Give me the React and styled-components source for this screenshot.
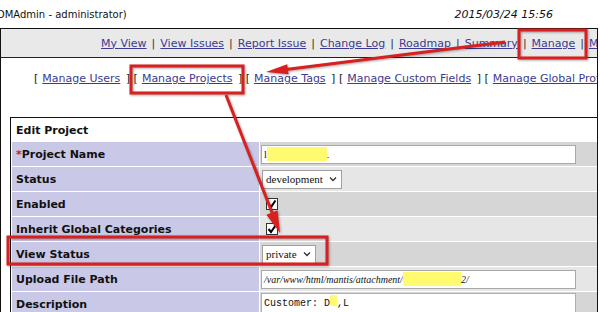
import React from "react";
import styled, { createGlobalStyle } from "styled-components";

const GlobalStyle = createGlobalStyle`
  html, body {
    margin: 0;
    padding: 0;
    background: #fff;
    overflow: hidden;
  }
`;

const Page = styled.div`
  position: relative;
  width: 600px;
  height: 312px;
  overflow: hidden;
  font-family: "DejaVu Sans", Verdana, sans-serif;
  color: #111;
  background: #fff;
`;

const TopBar = styled.div`
  height: 28px;
  display: flex;
  align-items: center;
  justify-content: space-between;
  padding-right: 47px;
  margin-left: -3px;
  white-space: nowrap;
`;

const LoggedIn = styled.span`
  font-size: 10px;
`;

const Clock = styled.span`
  font-size: 11px;
  font-style: italic;
`;

const Frame = styled.div`
  box-sizing: border-box;
  width: 598px;
  height: 284px;
  border: 1px solid #111;
  border-bottom: none;
`;

const MenuBar = styled.div`
  height: 28px;
  background: #e9e9e9;
  border-bottom: 1px solid #222;
  display: flex;
  align-items: center;
  padding-left: 100px;
  white-space: nowrap;
  overflow: hidden;
  font-size: 11px;
`;

const Link = styled.a`
  color: #3b3b91;
  text-decoration: underline;
  cursor: pointer;
`;

const Sep = styled.span`
  margin: 0 5px;
  color: #333;
`;

const SubMenu = styled.div`
  padding: 14px 0 0 33px;
  margin-bottom: 31px;
  line-height: 14px;
  height: 14px;
  font-size: 11px;
  white-space: nowrap;
  overflow: hidden;
`;

const Bracket = styled.span`
  margin: ${(p) => (p.$close ? "0 3.5px 0 5.5px" : "0 4px 0 0")};
  color: #222;
`;

const FormTable = styled.div`
  margin-left: 9px;
  border-top: 1px solid #111;
  border-left: 1px solid #111;
  padding: 1px 0 0 1px;
  display: grid;
  grid-template-columns: 247px 1fr;
  grid-template-rows: 22px;
  grid-auto-rows: 24px;
  gap: 1px;
  font-size: 11px;
`;

const HeaderCell = styled.div`
  grid-column: span 2;
  display: flex;
  align-items: center;
  padding-left: 4px;
  font-weight: bold;
  background: #fff;
`;

const Label = styled.div`
  background: #c9c9e7;
  display: flex;
  align-items: center;
  padding-left: 4px;
  font-weight: bold;
`;

const Req = styled.span`
  color: #c0243a;
`;

const Value = styled.div`
  background: ${(p) => (p.$light ? "#e6e6e6" : "#d6d6d6")};
  display: flex;
  align-items: ${(p) => (p.$top ? "flex-start" : "center")};
  padding-left: 1px;
  padding-top: ${(p) => (p.$top ? 1 : 0)}px;
`;

const TextBox = styled.div`
  box-sizing: border-box;
  width: 315px;
  height: 19px;
  background: #fff;
  border: 1px solid #a8a8a8;
  display: flex;
  align-items: center;
  padding-left: 2px;
  font-family: "Liberation Serif", "Times New Roman", serif;
  font-size: 10px;
  font-style: ${(p) => (p.$italic ? "italic" : "normal")};
  white-space: nowrap;
  overflow: hidden;
`;

const Redact = styled.span`
  display: inline-block;
  width: ${(p) => p.$w}px;
  height: ${(p) => p.$h || 14}px;
  background: #fffa6e;
`;

const Select = styled.div`
  box-sizing: border-box;
  height: 19px;
  margin-left: 1px;
  background: #fff;
  border: 1px solid #a0a0a0;
  display: flex;
  align-items: center;
  gap: 6px;
  padding: 0 4px 0 3px;
  font-family: "Liberation Serif", "Times New Roman", serif;
  font-size: 11px;
`;

const Check = styled.div`
  box-sizing: border-box;
  width: 12px;
  height: 12px;
  margin-left: 5px;
  background: #fff;
  border: 1px solid #333;
  display: flex;
  align-items: center;
  justify-content: center;
`;

const TextArea = styled.div`
  box-sizing: border-box;
  width: 315px;
  height: 30px;
  background: #fff;
  border: 1px solid #b0b0b0;
  padding: 1px 0 0 2px;
  font-family: "Liberation Mono", "Courier New", monospace;
  font-size: 10px;
  white-space: pre;
`;

const Overlay = styled.svg`
  position: absolute;
  left: 0;
  top: 0;
  width: 600px;
  height: 312px;
  pointer-events: none;
  filter: drop-shadow(1px 1px 1px rgba(0, 0, 0, 0.35));
`;

function Chevron() {
  return (
    <svg width="8" height="6" viewBox="0 0 8 6">
      <path d="M1 1.5 L4 4.5 L7 1.5" fill="none" stroke="#333" strokeWidth="1.3" />
    </svg>
  );
}

function Tick() {
  return (
    <svg width="10" height="10" viewBox="0 0 10 10">
      <path d="M1.5 5 L4 8 L8.5 1.5" fill="none" stroke="#000" strokeWidth="2" />
    </svg>
  );
}

const menu = ["My View", "View Issues", "Report Issue", "Change Log", "Roadmap", "Summary", "Manage", "My Account"];
const sub = ["Manage Users", "Manage Projects", "Manage Tags", "Manage Custom Fields", "Manage Global Profiles"];

function arrowHead(x1, y1, x2, y2, len, half) {
  const dx = x2 - x1;
  const dy = y2 - y1;
  const d = Math.hypot(dx, dy);
  const ux = dx / d;
  const uy = dy / d;
  const bx = x2 - ux * len;
  const by = y2 - uy * len;
  return `${x2},${y2} ${bx - uy * half},${by + ux * half} ${bx + uy * half},${by - ux * half}`;
}

function Annotations() {
  const red = "#d91f1f";
  return (
    <Overlay viewBox="0 0 600 312">
      <rect x="131" y="66" width="112" height="27" fill="none" stroke={red} strokeWidth="3" />
      <rect x="519" y="30" width="67" height="28" fill="none" stroke={red} strokeWidth="3" />
      <rect x="8" y="237" width="319" height="27" fill="none" stroke={red} strokeWidth="3" />
      <line x1="505" y1="42" x2="282" y2="70" stroke={red} strokeWidth="3" />
      <polygon points={arrowHead(505, 42, 266, 72, 22, 5)} fill={red} />
      <line x1="226" y1="95" x2="273" y2="215" stroke={red} strokeWidth="3" />
      <polygon points={arrowHead(226, 95, 280, 233, 22, 6)} fill={red} />
    </Overlay>
  );
}

export default function App() {
  return (
    <Page>
      <GlobalStyle />
      <TopBar>
        <LoggedIn>DMAdmin - administrator)</LoggedIn>
        <Clock>2015/03/24 15:56</Clock>
      </TopBar>
      <Frame>
        <MenuBar>
          {menu.map((m, i) => (
            <React.Fragment key={m}>
              {i > 0 && <Sep>|</Sep>}
              <Link>{m}</Link>
            </React.Fragment>
          ))}
        </MenuBar>
        <SubMenu>
          {sub.map((s) => (
            <React.Fragment key={s}>
              <Bracket>[</Bracket>
              <Link>{s}</Link>
              <Bracket $close>]</Bracket>
            </React.Fragment>
          ))}
        </SubMenu>
        <FormTable>
          <HeaderCell>Edit Project</HeaderCell>

          <Label>
            <Req>*</Req>Project Name
          </Label>
          <Value>
            <TextBox>
              l<Redact $w={60} />.
            </TextBox>
          </Value>

          <Label>Status</Label>
          <Value $light>
            <Select>
              development
              <Chevron />
            </Select>
          </Value>

          <Label>Enabled</Label>
          <Value>
            <Check>
              <Tick />
            </Check>
          </Value>

          <Label>Inherit Global Categories</Label>
          <Value $light>
            <Check>
              <Tick />
            </Check>
          </Value>

          <Label>View Status</Label>
          <Value>
            <Select>
              private
              <Chevron />
            </Select>
          </Value>

          <Label>Upload File Path</Label>
          <Value $light>
            <TextBox $italic>
              /var/www/html/mantis/attachment/<Redact $w={58} />2/
            </TextBox>
          </Value>

          <Label>Description</Label>
          <Value $top>
            <TextArea>
              Customer: D<Redact $w={7} $h={11} />,L
            </TextArea>
          </Value>
        </FormTable>
      </Frame>
      <Annotations />
    </Page>
  );
}
